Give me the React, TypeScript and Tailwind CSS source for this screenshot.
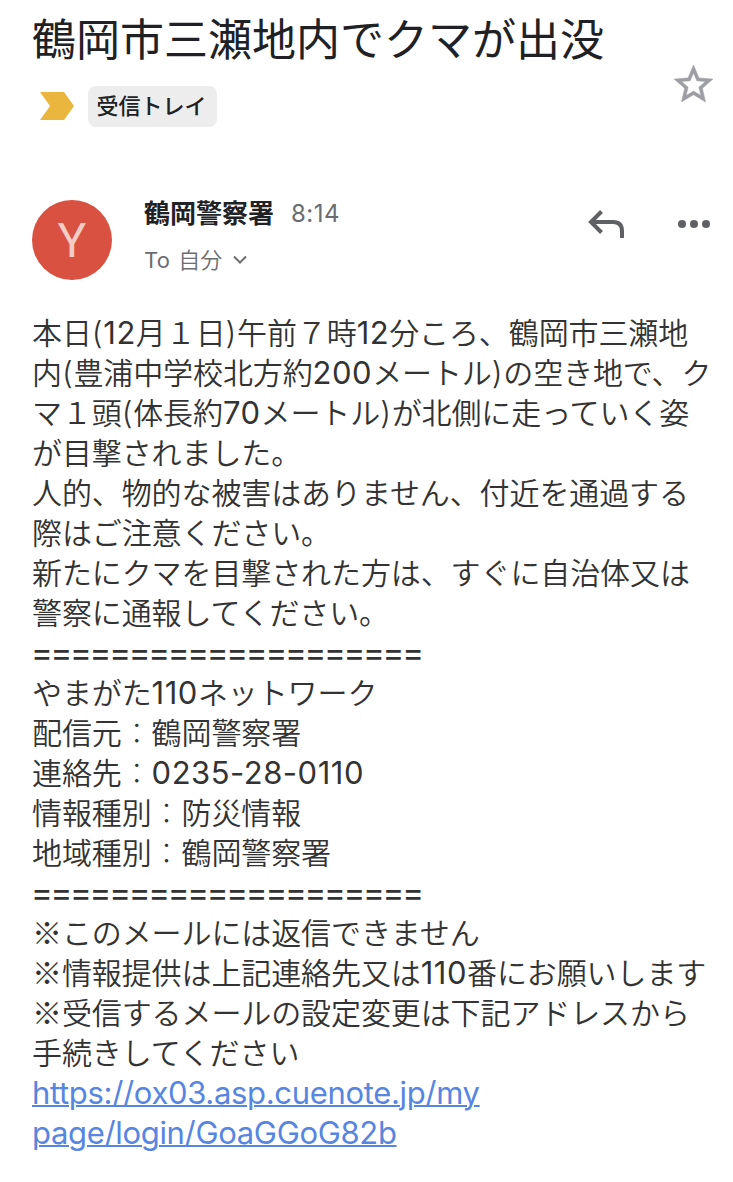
import { type FC } from "react";

const RULE = "====================";

const BODY_LINES = [
  "本日(12月１日)午前７時12分ころ、鶴岡市三瀬地",
  "内(豊浦中学校北方約200メートル)の空き地で、ク",
  "マ１頭(体長約70メートル)が北側に走っていく姿",
  "が目撃されました。",
  "人的、物的な被害はありません、付近を通過する",
  "際はご注意ください。",
  "新たにクマを目撃された方は、すぐに自治体又は",
  "警察に通報してください。",
  RULE,
  "やまがた110ネットワーク",
  "配信元：鶴岡警察署",
  "連絡先：0235-28-0110",
  "情報種別：防災情報",
  "地域種別：鶴岡警察署",
  RULE,
  "※このメールには返信できません",
  "※情報提供は上記連絡先又は110番にお願いします",
  "※受信するメールの設定変更は下記アドレスから",
  "手続きしてください",
];

const partClass = (part: string) => {
  if (part === "：") return "font-thin";
  if (/[()]/.test(part)) return "font-[Inter] text-[31px] font-light tracking-[0.7px]";
  return "font-[Inter] text-[31px] font-normal tracking-[0.5px]";
};

// Numbers are set in Inter, everything else in the Japanese face
const Line: FC<{ text: string }> = ({ text }) => {
  if (text === RULE) {
    return (
      <p className="-ml-px h-10 pt-px font-[Inter] text-[33px] font-normal tracking-[-2.3px] whitespace-nowrap">
        {text}
      </p>
    );
  }

  return (
    <p className="h-10 whitespace-nowrap">
      {text.split(/([()：]|[0-9-]+)/).map((part, i) =>
        i % 2 ? (
          <span key={i} className={partClass(part)}>
            {part}
          </span>
        ) : (
          part
        ),
      )}
    </p>
  );
};

const Subject: FC = () => (
  <div className="flex h-[128px] justify-between pr-5 pl-8">
    <div>
      <h1 className="h-[86px] pt-[7px] text-[44px] leading-[66px] font-normal whitespace-nowrap text-[#202124]">
        鶴岡市三瀬地内でクマが出没
      </h1>
      <div className="flex items-start pl-2">
        <svg className="mt-1.5" width="34" height="28" viewBox="0 0 34 28" fill="#ebb63e">
          <path d="M0 0H24L34 14L24 28H0L10 14Z" />
        </svg>
        <span className="ml-3.5 flex h-[41px] w-[129px] items-center justify-center rounded-[8px] bg-[#ededed] pr-0.5 text-[22px] font-medium text-[#202124]">
          受信トレイ
        </span>
      </div>
    </div>
    <svg
      className="mt-[65px]"
      width="39"
      height="37"
      viewBox="2 2 20 19"
      fill="#9d9ea3"
      stroke="#9d9ea3"
      strokeWidth="0.25"
    >
      <path d="M22 9.24l-7.19-.62L12 2 9.19 8.63 2 9.24l5.46 4.73L5.82 21 12 17.27 18.18 21l-1.63-7.03L22 9.24zM12 15.4l-3.76 2.27 1-4.28-3.32-2.88 4.38-.38L12 6.1l1.71 4.04 4.38.38-3.32 2.88 1 4.28L12 15.4z" />
    </svg>
  </div>
);

const Sender: FC = () => (
  <div className="mt-[72px] flex h-20 pr-[23px] pl-8">
    <div className="flex size-20 items-center justify-center rounded-full bg-[#d95140] pt-0.5 font-[Roboto] text-[48px] text-[#f5cbc6]">
      Y
    </div>
    <div className="ml-8 flex-1 whitespace-nowrap">
      <div className="flex h-7 items-center">
        <span className="text-[26px] leading-7 font-bold text-[#202124]">鶴岡警察署</span>
        <span className="ml-[17px] text-[24px] tracking-[0.5px] text-[#6b6d71]">8:14</span>
      </div>
      <div className="mt-[18px] flex h-7 items-center text-[22px] text-[#6b6d71]">
        <span className="tracking-[0.3px]">To</span>
        <span className="ml-2 font-[350]">自分</span>
        <svg className="ml-2.5" width="16" height="10" viewBox="0 0 16 10" fill="none" stroke="#6b6d71" strokeWidth="2">
          <path d="M2 1.5L8 7.5L14 1.5" />
        </svg>
      </div>
    </div>
    <svg className="mt-[9px]" width="38" height="32" viewBox="0 0 38 32" fill="none" stroke="#5f6064" strokeWidth="4">
      <path d="M14.5 2.5L4 13L14.5 23.5M4 13H26Q35 13 35 22V29" />
    </svg>
    <svg className="mt-5 ml-[53px]" width="32" height="8" viewBox="0 0 32 8" fill="#5f6064">
      <circle cx="4" cy="4" r="4" />
      <circle cx="16" cy="4" r="4" />
      <circle cx="28" cy="4" r="4" />
    </svg>
  </div>
);

const App: FC = () => {
  return (
    <main className="h-[1182px] overflow-hidden bg-white font-[Inter,'Noto_Sans_CJK_JP',sans-serif]" lang="ja">
      <Subject />
      <Sender />
      <article className="mt-[31px] pl-8 font-['Noto_Sans_CJK_JP',sans-serif] text-[30px] leading-10 font-[350] tracking-[-0.1px] text-[#333333]">
        {BODY_LINES.map((line, i) => (
          <Line key={i} text={line} />
        ))}
        <a
          href="#"
          className="block pt-0.5 font-[Inter] text-[31px] font-normal tracking-[-0.33px] text-[#5686e1] underline decoration-2"
        >
          https://ox03.asp.cuenote.jp/my
          <br />
          page/login/GoaGGoG82b
        </a>
      </article>
    </main>
  );
};

export default App;
